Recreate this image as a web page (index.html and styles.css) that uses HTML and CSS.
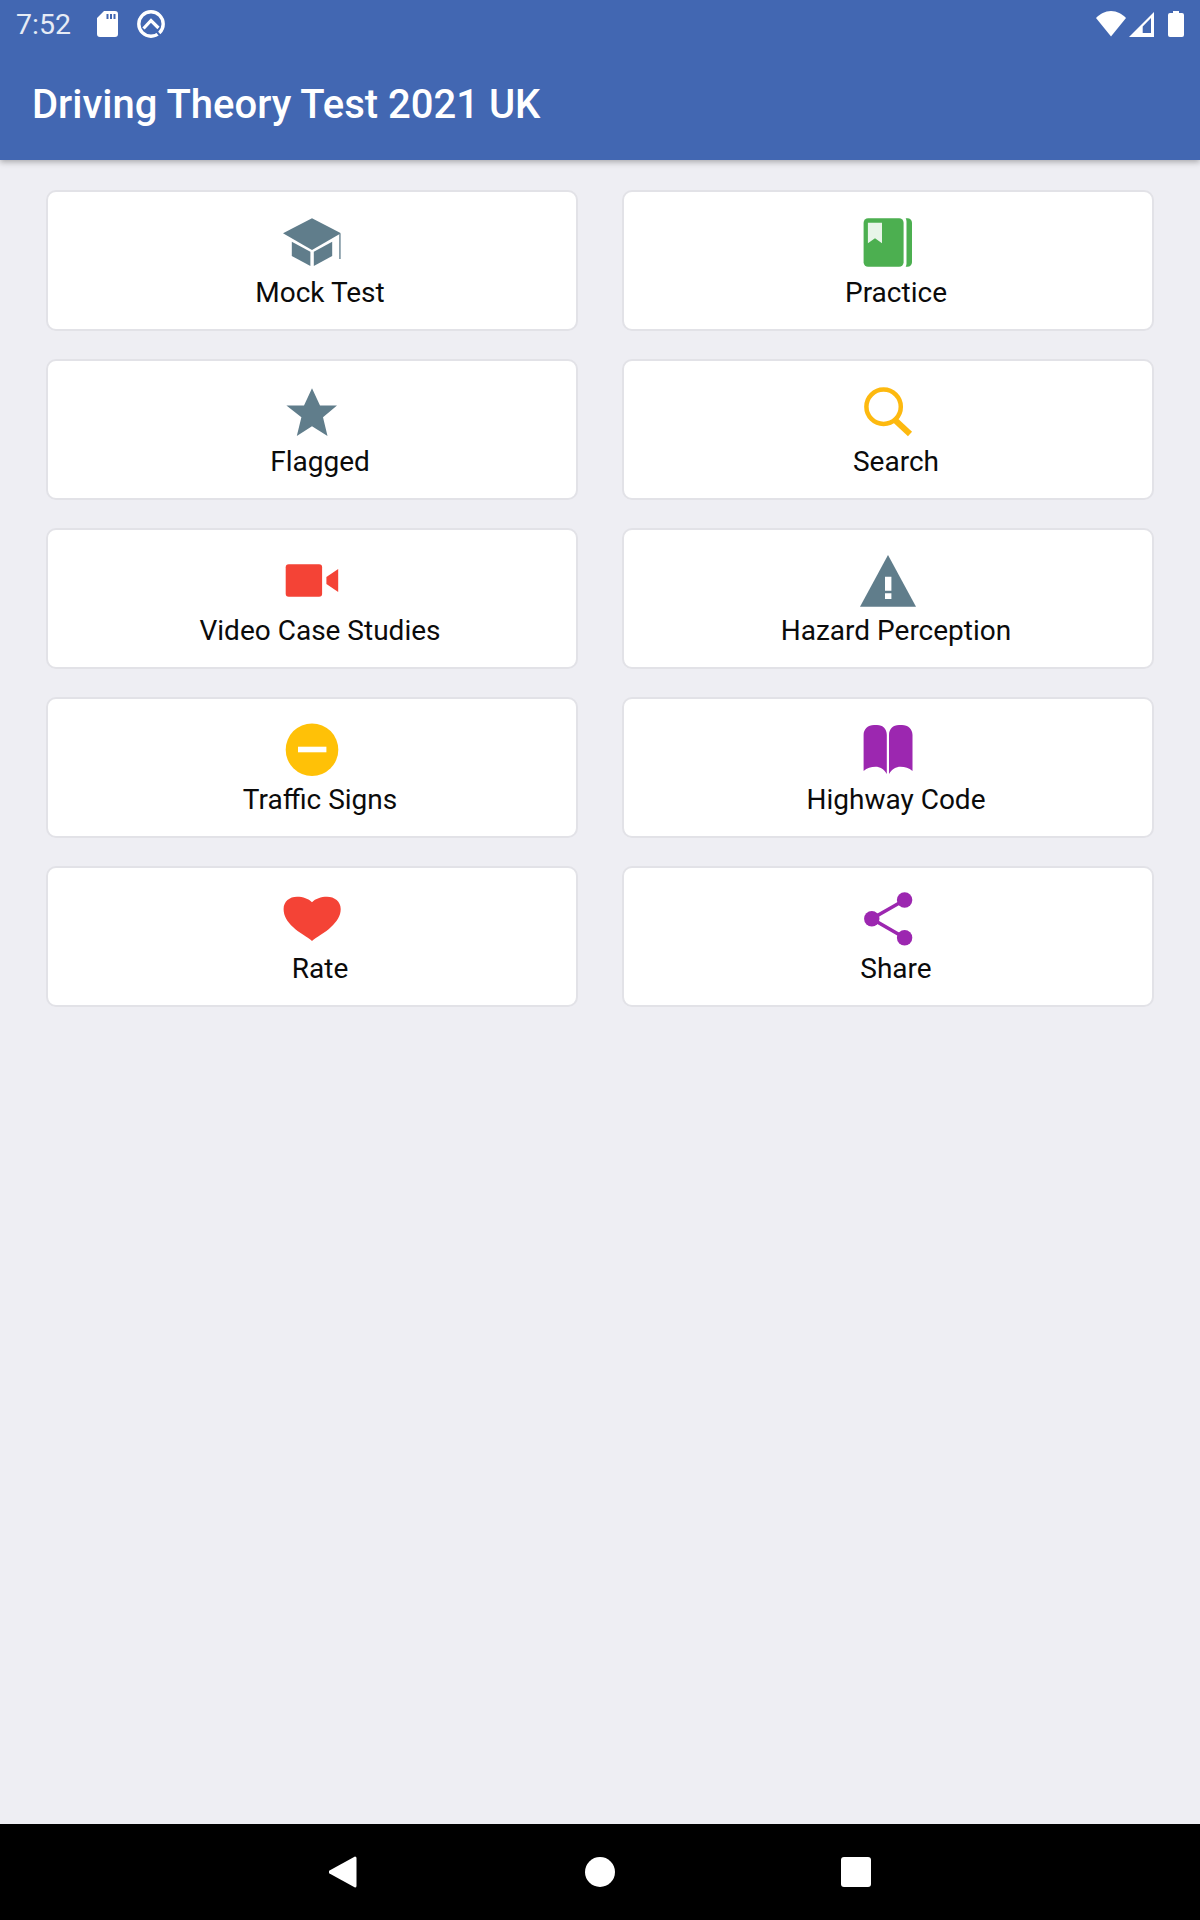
FILE: index.html
```html
<!DOCTYPE html>
<html>
<head>
    <title>Driving Theory Test 2021 UK</title>
    <link rel="stylesheet" href="styles.css">
</head>
<body>
    <div class="screen">
        <header class="app-header">
            <div class="status-bar">
                <span class="clock">7:52</span>
                <svg class="sd-icon" width="21" height="26" viewBox="0 0 21 26">
                    <path fill-rule="evenodd" d="M7 0H18a3 3 0 0 1 3 3V23a3 3 0 0 1-3 3H3a3 3 0 0 1-3-3V7zM9.500 3v5h2V3zM13 3v5h2V3zM16.500 3v5h2V3z"/>
                </svg>
                <svg class="q-icon" width="28" height="28" viewBox="0 0 28 28">
                    <circle class="q-line" cx="14" cy="14" r="12.200" stroke-width="3.400"/>
                    <path class="q-line" stroke-width="3.200" d="M6.500 18.500L14 10.500L21.500 18"/>
                    <path class="q-gap" stroke-width="2" d="M17.500 19L25 28"/>
                </svg>
                <div class="status-right">
                    <svg width="30" height="26" viewBox="0 0 30 26">
                        <path d="M15 25.500L0 7C4 3 9 0 15 0S26 3 30 7z"/>
                    </svg>
                    <svg width="25" height="25" viewBox="0 0 25 25">
                        <path fill-rule="evenodd" d="M0 25L25 0V25zM22 6L13.700 14.500V21H22z"/>
                    </svg>
                    <svg class="battery" width="16" height="26" viewBox="0 0 16 26">
                        <path d="M5 0h6v2h3a2 2 0 0 1 2 2v20a2 2 0 0 1-2 2H2a2 2 0 0 1-2-2V4a2 2 0 0 1 2-2h3z"/>
                    </svg>
                </div>
            </div>
            <div class="toolbar">
                <h1>Driving Theory Test 2021 UK</h1>
            </div>
        </header>

        <main class="menu-grid">
            <a class="menu-card">
                <svg class="menu-icon slate" viewBox="0 0 56 56">
                    <path d="M28 4.300L57 19.300L28 36L-1 19.300z"/>
                    <path d="M7.800 27.700L26.400 37.700V52L7.800 42z"/>
                    <path d="M48.200 27.700L29.800 37.700V52L48.200 42z"/>
                    <rect class="cap-rod" x="55" y="20" width="1.800" height="25"/>
                </svg>
                <span class="menu-label">Mock Test</span>
            </a>
            <a class="menu-card">
                <svg class="menu-icon green" viewBox="0 0 56 56">
                    <rect x="3.600" y="4.300" width="40" height="48.400" rx="4.500"/>
                    <path d="M45.700 4.300H47.500a4.500 4.500 0 0 1 4.500 4.500V48.200a4.500 4.500 0 0 1-4.500 4.500H45.700a7 7 0 0 0 .8-3V7.500a7 7 0 0 0-.8-3.200z"/>
                    <path class="bookmark" d="M7.900 8.700H22V29.300L15 24.300L7.900 29.300z"/>
                </svg>
                <span class="menu-label">Practice</span>
            </a>
            <a class="menu-card">
                <svg class="menu-icon slate" viewBox="0 0 56 56">
                    <path d="M28 5.300L36 22.600H53L39 34.300L43.500 53L28 43.300L12.800 53L17.400 34.300L2.400 22.600H20z"/>
                </svg>
                <span class="menu-label">Flagged</span>
            </a>
            <a class="menu-card">
                <svg class="menu-icon amber" viewBox="0 0 56 56">
                    <circle class="outline" cx="23.600" cy="23.700" r="17.200" stroke-width="4.500"/>
                    <path class="outline" stroke-width="6" d="M35.500 37.500L50 51"/>
                </svg>
                <span class="menu-label">Search</span>
            </a>
            <a class="menu-card">
                <svg class="menu-icon red" viewBox="0 0 56 56">
                    <rect x="1.700" y="12.300" width="36.400" height="32.400" rx="3"/>
                    <path d="M54.200 17V40L42.400 32V25z"/>
                </svg>
                <span class="menu-label">Video Case Studies</span>
            </a>
            <a class="menu-card">
                <svg class="menu-icon slate" viewBox="0 0 56 56">
                    <path d="M28 3L56 54.700H0z"/>
                    <path class="knockout" d="M25 24.700H31.400V38.700H25zM25 41.300H31.400V47H25z"/>
                </svg>
                <span class="menu-label">Hazard Perception</span>
            </a>
            <a class="menu-card">
                <svg class="menu-icon amber-solid" viewBox="0 0 56 56">
                    <circle cx="28" cy="28.700" r="26.300"/>
                    <rect class="knockout" x="14" y="25.700" width="28.400" height="5.600"/>
                </svg>
                <span class="menu-label">Traffic Signs</span>
            </a>
            <a class="menu-card">
                <svg class="menu-icon purple" viewBox="0 0 56 56">
                    <path d="M3.600 14C3.600 8 8 4 14 4H17C23 4 26.800 8 26.800 14V53C24 48 20 45.700 15.500 45.700C11 45.700 7 47 3.600 50z"/>
                    <path d="M52.500 14C52.500 8 48 4 42 4H39C33 4 29 8 29 14V53C32 48 36 45.700 40.500 45.700C45 45.700 49 47 52.500 50z"/>
                </svg>
                <span class="menu-label">Highway Code</span>
            </a>
            <a class="menu-card">
                <svg class="menu-icon red" viewBox="0 0 56 56">
                    <path d="M28 51C24 47 15 43 9 37C3 31.500 -0.400 26 -0.400 19C-0.400 11.500 5.500 6.700 13 6.700C19 6.700 24.500 8.500 28 12.300C31.500 8.500 37 6.700 43 6.700C50.500 6.700 56.700 11.500 56.700 19C56.700 26 53 31.500 47 37C41 43 32 47 28 51z"/>
                </svg>
                <span class="menu-label">Rate</span>
            </a>
            <a class="menu-card">
                <svg class="menu-icon purple" viewBox="0 0 56 56">
                    <path class="outline" stroke-width="3.600" d="M44.600 10L11.800 28.700L44.600 47.700"/>
                    <circle cx="44.600" cy="10" r="7.700"/>
                    <circle cx="11.800" cy="28.700" r="7.700"/>
                    <circle cx="44.600" cy="47.700" r="7.700"/>
                </svg>
                <span class="menu-label">Share</span>
            </a>
        </main>

        <nav class="nav-bar">
            <svg width="30" height="32" viewBox="0 0 30 32">
                <path d="M26 0.500a1.500 1.500 0 0 1 1.500 1.500V30a1.500 1.500 0 0 1-1.500 1.500L0.500 17.500a2 2 0 0 1 0-3z"/>
            </svg>
            <svg width="30" height="30" viewBox="0 0 30 30">
                <circle cx="15" cy="15" r="15"/>
            </svg>
            <svg width="30" height="30" viewBox="0 0 30 30">
                <rect width="30" height="30" rx="3"/>
            </svg>
        </nav>
    </div>
</body>
</html>
```

FILE: styles.css
```css
body {
    margin: 0;
    font-family: Roboto, "Liberation Sans", sans-serif;
    background-color: #eeeef3;
}

.screen {
    display: flex;
    flex-direction: column;
    height: 1920px;
    overflow: hidden;
}

.app-header {
    position: relative;
    height: 160px;
    flex-shrink: 0;
    background-color: #4267b2;
    color: white;
    box-shadow: 0 2px 6px rgba(0, 0, 0, 0.3);
}

.status-bar {
    display: flex;
    align-items: center;
    height: 48px;
    padding: 0 16px;
}

.status-bar svg {
    display: block;
    fill: white;
}

.clock {
    font-size: 28.500px;
    color: #e6ebf5;
    margin-right: 26px;
}

.sd-icon {
    margin-right: 19px;
}

.q-icon .q-line {
    fill: none;
    stroke: white;
}

.q-icon .q-gap {
    fill: none;
    stroke: #4267b2;
}

.status-right {
    display: flex;
    align-items: center;
    gap: 3px;
    margin-left: auto;
}

.battery {
    margin-left: 11px;
}

.toolbar {
    display: flex;
    align-items: center;
    height: 112px;
    padding: 0 32px;
}

h1 {
    margin: 0;
    font-size: 40px;
    font-weight: 500;
}

.menu-grid {
    flex: 1;
    display: grid;
    grid-template-columns: 532px 532px;
    grid-auto-rows: 141px;
    gap: 28px 44px;
    align-content: start;
    padding: 30px 46px 0;
}

.menu-card {
    display: flex;
    flex-direction: column;
    align-items: center;
    box-sizing: border-box;
    padding-top: 22px;
    background-color: white;
    border: 2px solid #e2e2e7;
    border-radius: 10px;
}

.menu-icon {
    display: block;
    width: 56px;
    height: 56px;
    overflow: visible;
}

.menu-label {
    margin-top: 6px;
    margin-left: 16px;
    font-size: 28px;
    color: #0b0b0b;
}

.slate { fill: #607d8b; }
.green { fill: #4caf50; }
.red { fill: #f44336; }
.purple { fill: #9c27b0; }
.amber-solid { fill: #ffc107; }

.amber .outline { stroke: #fdb90f; }
.purple .outline { stroke: #9c27b0; }

.outline {
    fill: none;
}

.knockout {
    fill: white;
}

.bookmark {
    fill: #e8f5e9;
}

.cap-rod {
    fill: #8ba0ab;
}

.nav-bar {
    display: flex;
    align-items: center;
    justify-content: center;
    gap: 226px;
    height: 96px;
    flex-shrink: 0;
    background-color: black;
}

.nav-bar svg {
    display: block;
    fill: white;
}
```
